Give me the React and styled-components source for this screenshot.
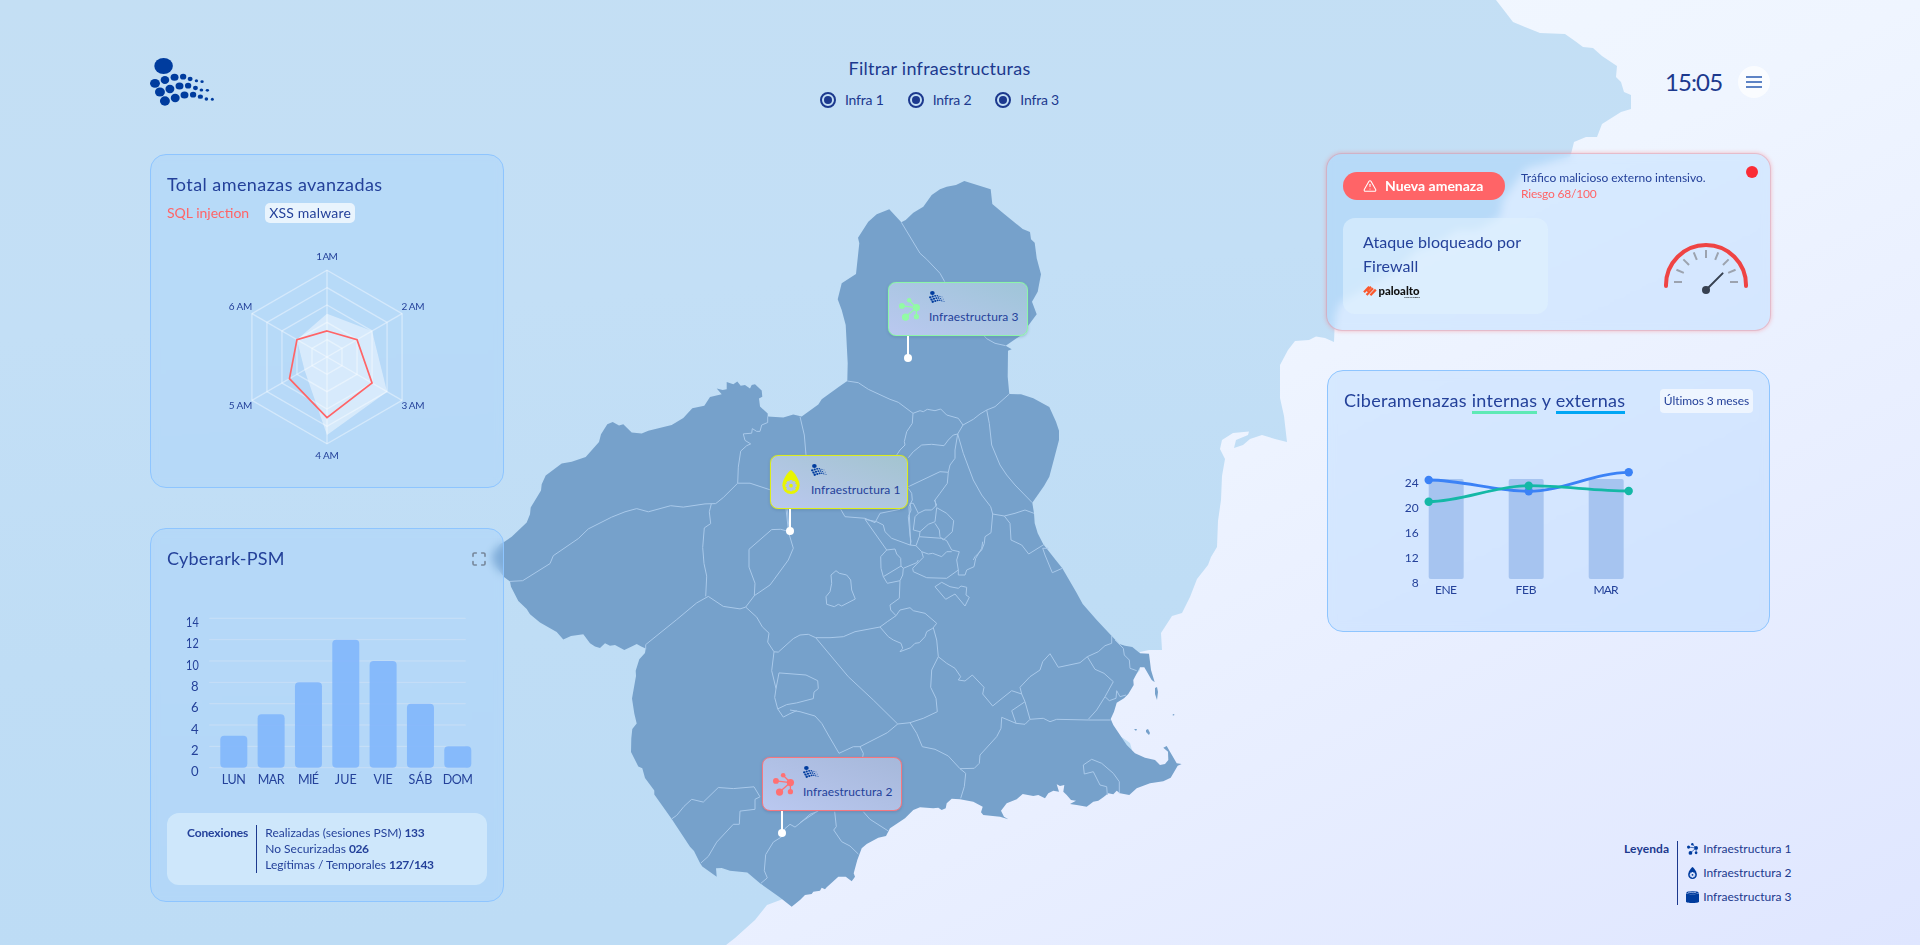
import React from "react";
import styled, { createGlobalStyle } from "styled-components";
import { Maximize, TriangleAlert } from "lucide-react";

const GlobalStyle = createGlobalStyle`
  * { box-sizing: border-box; }
  body { margin: 0; font-family: Lato, "Open Sans", sans-serif; color: #1c398e; }
`;

/* ---------- Map data: each sheet has its own origin, 3 units per pixel ---------- */
const sheet = (ox, oy, sy = 1 / 3) => (list) =>
  list.trim().split(/\s+/).map((p) => {
    const [x, y] = p.split(",").map(Number);
    return `${(ox + x / 3).toFixed(1)},${(oy + y * sy).toFixed(1)}`;
  }).join(" ");

const north = sheet(740, 160);
const south = sheet(800, 480);
const west = sheet(500, 360, 0.35714);

const REGION = [
  north("673,63 752,88 757,132 790,160 848,207 870,216 873,238 884,248 890,295 903,343 893,395 876,425 890,463 866,495 840,528 797,557 815,568 804,572 803,650 808,702 843,703 880,715 928,741 948,785 957,812 957,840 940,905 928,950 912,978 877,1028 882,1060 884,1090 893,1120 910,1153 947,1200"),
  south("787,265 828,335 848,372 890,420 935,468 958,492 975,497 997,501 1020,520 1047,521 1053,570 1064,607 1055,600 1033,562 1020,562 1000,600 1001,615 985,642 972,655 950,668 942,695 932,717 940,735 960,765 980,795 1005,820 1035,833 1065,840 1080,855 1095,852 1105,840 1104,815 1090,803 1100,798 1110,815 1130,850 1145,852 1133,857 1112,893 1090,904 1050,910 1010,925 988,945 960,940 950,932 940,943 925,940 910,952 895,962 880,965 860,980 830,975 810,972 828,962 813,960 800,945 790,935 793,915 780,918 770,913 777,935 760,932 745,940 735,955 715,945 700,948 668,942 650,958 620,970 603,992 612,1010 625,1018 600,1010 550,1005 543,997 548,980 520,965 480,958 455,956 440,970 437,985 425,990 415,983 400,985 360,982 340,990 315,1015 270,1045 258,1068 235,1073 200,1092 185,1105 172,1140 161,1180 165,1190 155,1204 137,1190 115,1190 95,1208 80,1222 75,1228 65,1223 60,1232 40,1235 35,1242 15,1245 0,1260"),
  west("875,1531 840,1505 780,1465 742,1435 690,1430 665,1422 648,1423 650,1447 607,1418 600,1408 582,1375 570,1363 515,1285 463,1217 463,1205 435,1170 427,1143 415,1138 393,1098 394,1060 397,1033 410,1018 403,990 396,948 408,885 407,870 418,838 435,820 437,808 425,803 410,795 395,802 373,812 345,798 330,800 315,793 300,806 285,802 270,793 250,768 213,773 190,783 170,762 120,735 90,712 80,697 55,675 33,635 30,620 12,608 -20,570 -25,545 0,515 12,510 35,495 80,455 90,432 92,413 123,365 125,348 137,323 185,290 215,285 257,272 297,230 303,208 322,180 338,174 357,183 370,180 395,203 425,206 445,198 515,182 550,162 577,135 613,128 630,104 665,96 650,80 668,84 680,82 680,62 700,68 712,60 722,72 735,70 750,80 755,70 765,68 785,85 787,103 777,108 780,130 803,150 803,158 850,161 880,153 905,158 955,125 965,110 1020,73"),
  north("322,663 323,610 317,495 305,450 293,418 305,370 348,342 358,250 354,233 385,185 410,163 448,148 484,187 497,180 520,158 550,140 575,105 600,88 620,80 648,75 673,63"),
].join(" ");

const BORDERS = [
  ...[
    "484,187 540,280 560,298 600,340 614,365",
    "733,528 740,536 765,550 797,557",
    "322,663 355,668 385,688 450,718 475,727 519,760 540,752 550,755 562,748 585,752 602,747 620,765 655,775 669,795 700,778 720,762 740,750 765,740 808,702",
    "519,760 517,790 500,815 493,845 495,855 480,870 470,885",
    "740,750 748,790 755,855 780,915 800,945 825,975 877,1028",
    "669,795 653,822 670,880 700,960 725,1005 752,1040 758,1062 753,1118 735,1130 733,1150 725,1170 705,1190 700,1200",
    "505,893 520,875 545,855 575,853 612,857 625,840 640,825 653,822 645,870 645,895 630,915 625,937 600,935 505,980",
    "625,937 622,970 600,1000 585,1020 588,1040",
    "180,770 193,825 198,885",
    "758,1062 793,1068 825,1060 855,1050 882,1060",
    "793,1068 810,1090 813,1140 845,1155 866,1182 913,1153",
    "302,1048 315,1070 375,1075 405,1088 420,1060 480,1048",
    "505,985 515,1000 517,1020 507,1040 512,1155",
  ].map(north),
  ...[
    "195,118 230,125 250,135 255,155 275,175 330,195 348,197 365,215 370,232 338,265 340,275 380,293 440,295 475,270 475,285 495,285 500,270 522,260 527,235 545,205 548,185",
    "195,118 260,210 285,207 290,222 302,235 303,258 310,265 350,248 355,240",
    "260,210 242,230 243,265 250,290 262,310 300,302 308,285 310,265",
    "250,290 303,258",
    "300,302 298,355 270,375 272,390 288,407",
    "330,70 333,90 325,110 330,165 333,185 330,195",
    "330,70 340,70 355,100 375,90 395,90 410,75 403,60",
    "410,83 405,125 385,133 360,155 340,150 345,110 355,100",
    "410,83 440,100 461,122 457,155 430,180 420,170 418,150 405,130",
    "360,155 358,170 425,175 440,182 455,210 478,215 470,240 475,270",
    "358,170 348,197",
    "365,215 385,222 398,220 425,230 440,215 455,215",
    "405,320 425,307 450,320 475,325 483,318 500,322 498,345 508,352 495,378 465,342 437,358 405,320",
    "108,272 118,280 140,285 152,300 155,330 166,357 125,378 115,373 103,380 80,373 78,350 90,335 95,310 93,285 108,272",
    "288,407 300,390 330,383 340,392 375,400 410,430 398,445 380,455 375,470 358,488 345,490 332,503 300,515 308,505 303,490 280,480 265,470 240,441 262,425 288,407",
    "0,465 25,463 47,473 90,473 130,470 165,455 240,441",
    "47,473 145,590 220,660 293,732 330,728 370,715 412,695 408,655 392,622 395,570 415,530 410,480 400,443",
    "415,530 440,550 465,565 482,590 475,600 495,603 517,585 552,622 548,642 578,678 600,660 635,632 665,642 660,622 690,590 720,570 728,545 750,521 775,562 840,548 862,530 895,515 915,497 935,490 935,468",
    "862,530 885,568 912,580 940,605 915,650 890,690 865,718",
    "915,650 928,662 948,655 950,632 960,650 978,645",
    "945,480 970,505 973,525 988,540 990,565 1010,572",
    "665,642 675,665 635,692 648,730 675,733 690,718 730,715 750,725 770,718 865,720 932,720",
    "675,665 690,718",
    "648,730 605,712 603,745 590,770 540,825 538,850 523,865 480,866 445,828 405,808 367,800 350,760 330,728",
    "480,866 497,880 493,920 482,955",
    "293,732 262,758 180,800 160,800 117,820 85,765 65,730 45,708 0,695 -30,690",
    "180,800 190,820 188,832",
    "958,940 958,905 940,880 905,850 875,838 850,855 853,882 880,875 900,915 920,920 922,945",
    "745,205 728,205 735,225 757,278 787,265",
    "0,1028 50,995",
    "104,995 109,1040 101,1050 125,1085 150,1098 175,1122",
    "190,995 210,1018 265,1053",
  ].map(south),
  ...[
    "30,620 68,618 150,570 160,548 235,500 265,473 335,440 375,425 410,416 445,425 512,408 550,412 615,403 647,402 670,385 713,345 750,345 812,364",
    "713,345 715,300 722,255 740,240 752,235 735,225 730,207 755,205 757,192 770,200 780,200 785,182 803,175 803,158",
    "634,403 628,425 632,458 613,470 608,525 612,570 620,605 617,662",
    "437,797 530,727 590,680 625,662 670,690 720,697 737,692 770,720 787,747 807,765 803,790 822,817 835,818 880,780 900,770",
    "437,797 437,810",
    "737,692 763,660 810,630 822,615 865,560 880,527 865,480 842,474 815,475 747,530 747,580 765,625 763,660",
    "858,417 865,475",
    "862,417 867,475",
    "822,817 815,870 828,920 824,945 833,977 850,1000 870,990 890,982",
    "833,977 860,965 890,960 940,948 942,930 955,920 953,898 918,882 837,876 828,920",
    "515,1285 530,1275 552,1250 575,1230 610,1238 655,1197 700,1200 762,1195 780,1223 765,1230 765,1258 720,1263 718,1300 700,1300 650,1350 625,1390 603,1408",
    "845,1335 820,1350 797,1385 793,1430 802,1450 783,1465",
    "845,1335 855,1312 870,1300 885,1308 900,1297 930,1272 955,1263",
  ].map(west),
];

const MAINLAND =
  "0,0 1496,0 1503,9 1513,22 1525,27 1540,33 1565,34 1575,41 1583,47 1593,48 1602,56 1617,66 1616,77 1621,82 1624,92 1631,95 1631,109 1621,112 1602,124 1597,137 1586,137 1574,142 1571,154 1570,157 1557,160 1540,165 1527,168 1517,180 1503,200 1500,217 1477,230 1457,230 1437,243 1417,250 1393,273 1367,287 1340,303 1335,317 1334,342 1325,338 1316,336.5 1309,340 1295,341 1288,350 1280,365 1280,398 1284,416 1287,442 1275,439 1262,435 1250,439 1243,445 1234,448 1236,440 1248,435 1249,431.5 1233,433 1222,440 1220,449 1225,459 1222,476 1221,500 1218,521 1217,547 1211,557 1208,565 1197,579 1190,597 1182,613 1172,616 1161,633 1162,650 1149,650 1140,652 1140,670 1133,678 1100,690 1105,730 1123,738 1130,743 1132,750 1100,760 900,800 783,899 767,905 755,920 735,938 726,945 0,945";

/* ---------- Page ---------- */
const Page = styled.div`
  position: relative;
  width: 1920px;
  height: 945px;
  overflow: hidden;
  padding: 54px 149px 40px 150px;
  display: flex;
  flex-direction: column;
  background: linear-gradient(to bottom right, #f3f9ff 20%, #eff5ff 50%, #e9efff 70%, #dfe6ff 100%);
`;

const MapLayer = styled.svg`
  position: absolute;
  inset: 0;
`;

const Header = styled.header`
  position: relative;
  height: 56px;
  display: flex;
  align-items: center;
  justify-content: space-between;
`;

const Filters = styled.div`
  display: flex;
  flex-direction: column;
  align-items: center;
  gap: 8px;
`;

const Title = styled.h2`
  margin: 0;
  font-size: 18px;
  line-height: 28px;
  font-weight: 400;
  letter-spacing: ${(p) => p.$track || 0}px;
  white-space: nowrap;
`;

const Options = styled.div`
  display: flex;
  gap: 24px;
`;

const Option = styled.label`
  display: flex;
  align-items: center;
  gap: 9px;
  font-size: 14px;
  line-height: 20px;
  letter-spacing: -0.2px;
`;

const Radio = styled.span`
  width: 16px;
  height: 16px;
  border-radius: 50%;
  border: 2px solid #1c398e;
  padding: 2px;
  background: #1c398e content-box;
`;

const Status = styled.div`
  display: flex;
  align-items: center;
  gap: 16px;
  margin-right: 1px;
`;

const Clock = styled.span`
  width: 57px;
  font-size: 24px;
  line-height: 32px;
  letter-spacing: -0.9px;
  white-space: nowrap;
`;

const MenuButton = styled.button`
  width: 32px;
  height: 32px;
  padding: 0;
  border: 0;
  border-radius: 50%;
  display: grid;
  place-items: center;
  background: rgba(255, 255, 255, 0.7);
`;

const Main = styled.main`
  position: relative;
  flex: 1;
  margin-top: 44px;
  display: flex;
  justify-content: space-between;
`;

const Column = styled.div`
  width: ${(p) => p.$width}px;
  display: flex;
  flex-direction: column;
  gap: 40px;
`;

const Panel = styled.section`
  position: relative;
  height: ${(p) => p.$height}px;
  padding: 16px;
  border: 1px solid #8ec5ff;
  border-radius: 16px;
  background: rgba(155, 203, 255, 0.28);
  backdrop-filter: blur(4px);
  color: #24419a;
`;

const AlertPanel = styled(Panel)`
  margin: -1px 0 -1px -1px;
  border-color: rgba(255, 100, 103, 0.34);
  box-shadow: 0 0 4px rgba(255, 100, 103, 0.4);
`;

const ThreatsPanel = styled(Panel)`
  margin-right: 1px;
`;

const PanelHead = styled.div`
  display: flex;
  align-items: center;
  justify-content: space-between;
  height: 28px;
  h2 { margin-top: -2px; }
`;

const Tags = styled.div`
  display: flex;
  gap: 16px;
  margin: 4px 0 8px;
  font-size: 14px;
  line-height: 20px;
`;

const Tag = styled.span`
  color: ${(p) => (p.$danger ? "#ff6467" : "inherit")};
  background: ${(p) => (p.$danger ? "none" : "rgba(255,255,255,.7)")};
  padding: ${(p) => (p.$danger ? 0 : "0 4px")};
  border-radius: 5px;
  white-space: nowrap;
  letter-spacing: ${(p) => p.$track || 0}px;
`;

const Badge = styled.span`
  padding: 0 4px;
  border-radius: 4px;
  background: rgba(255, 255, 255, 0.6);
  font-size: 12px;
  line-height: 24px;
  letter-spacing: -0.1px;
  white-space: nowrap;
`;

const Underline = styled.span`
  display: inline-block;
  height: 28px;
  border-bottom: 3px solid ${(p) => p.$color};
`;

const ChartSvg = styled.svg`
  display: block;
  overflow: visible;
`;

const Summary = styled.div`
  height: 72px;
  padding: 12px 20px;
  border-radius: 12px;
  background: rgba(223, 242, 254, 0.6);
  display: flex;
  font-size: 12px;
  line-height: 16px;
`;

const Lead = styled.strong`
  padding-right: 8px;
  border-right: 1.4px solid #1c398e;
  letter-spacing: ${(p) => p.$track || 0}px;
`;

const Lines = styled.div`
  padding-left: 8px;
  white-space: nowrap;
  b { letter-spacing: -0.4px; }
`;

const AlertTop = styled.div`
  display: flex;
  align-items: center;
  gap: 16px;
  height: 32px;
  margin-bottom: 16px;
  font-size: 12px;
  line-height: 16px;
`;

const AlertPill = styled.div`
  width: 162px;
  height: 28px;
  border-radius: 14px;
  padding-left: 20px;
  display: flex;
  align-items: center;
  gap: 8px;
  color: #fff;
  background: #ff6467;
  font-size: 14px;
  font-weight: 700;
  white-space: nowrap;
`;

const Risk = styled.div`
  color: #ff6467;
  letter-spacing: -0.2px;
`;

const Dot = styled.span`
  position: absolute;
  top: 12px;
  right: 12px;
  width: 12px;
  height: 12px;
  border-radius: 50%;
  background: #fb2c36;
`;

const AlertBody = styled.div`
  display: flex;
  justify-content: space-between;
`;

const Blocked = styled.div`
  width: 205px;
  height: 96px;
  padding: 12px 20px;
  border-radius: 12px;
  background: rgba(223, 242, 254, 0.6);
  font-size: 16px;
  line-height: 24px;
  letter-spacing: 0.08px;
  white-space: nowrap;
`;

const Legend = styled.div`
  margin: auto -21px 0 auto;
  width: 168px;
  height: 64px;
  display: flex;
  font-size: 12px;
  line-height: 16px;
  color: #1c398e;
`;

const LegendItems = styled.div`
  display: flex;
  flex-direction: column;
  gap: 8px;
  padding-left: 8px;
`;

const LegendItem = styled.div`
  display: flex;
  align-items: center;
  gap: 4px;
  white-space: nowrap;
  svg { width: 13px; height: 12px; }
`;

const Callout = styled.div`
  position: absolute;
  left: ${(p) => p.$x}px;
  top: ${(p) => p.$y}px;
  width: ${(p) => p.$w}px;
  height: 54px;
  padding: 8px;
  display: flex;
  gap: 8px;
  border: 1px solid ${(p) => p.$color};
  border-radius: 8px;
  background: linear-gradient(to top right, #bac8f0, ${(p) => p.$tint});
  box-shadow: 0 0 1px ${(p) => p.$color}, 0 1px 3px rgba(40, 70, 120, 0.25);
  color: #24419a;
  &::before {
    content: "";
    position: absolute;
    left: 18px;
    top: 53px;
    width: 2px;
    height: 22px;
    background: #fff;
  }
  &::after {
    content: "";
    position: absolute;
    left: 15px;
    top: 71px;
    width: 8px;
    height: 8px;
    border-radius: 50%;
    background: #fff;
  }
`;

const CalloutIcon = styled.span`
  width: 24px;
  height: 36px;
  display: grid;
  place-items: center;
`;

const CalloutText = styled.div`
  display: flex;
  flex-direction: column;
  gap: 6px;
  font-size: 12px;
  line-height: 16px;
  letter-spacing: 0.08px;
  white-space: nowrap;
`;

/* ---------- Drawings ---------- */
const LOGO_DOTS = [
  [71, 78, 28, 24],
  [45, 130, 15, 13], [75, 120, 13, 12], [104, 112, 12, 10.5], [130, 110, 9.5, 8.5], [151, 117, 7.5, 6.5], [170, 122, 5, 4.5], [187, 125, 5, 4],
  [60, 156, 15, 13.5], [90, 147, 13.5, 12.5], [119, 138, 12, 10.5], [145, 137, 9.5, 8.5], [167, 144, 7.5, 6.5], [185, 150, 5.5, 4.5], [203, 151, 5, 4],
  [75, 183, 15, 14], [106, 174, 13.5, 12.5], [134, 165, 12, 10.5], [160, 164, 9.5, 8.5], [182, 170, 8, 6.5], [200, 177, 5.5, 5.5], [218, 178, 4.5, 4.5],
];

const Logo = ({ width, height }) => (
  <svg width={width} height={height} viewBox="30 54 193 144" fill="#003c9e" preserveAspectRatio="none">
    {LOGO_DOTS.map(([x, y, rx, ry]) => <ellipse key={`${x}-${y}`} cx={x} cy={y} rx={rx} ry={ry} />)}
  </svg>
);

const MenuIcon = () => (
  <svg width="16" height="16" stroke="#2a5bb3" strokeWidth="1.7">
    <path d="M0 3H16M0 8H16M0 13H16" />
  </svg>
);

const NetworkIcon = ({ color, size }) => (
  <svg width={size} height={size} viewBox="0 0 66 70" fill={color} stroke={color}>
    <path d="M54 29 10 24M54 29 32 7M54 29 21 58M54 29V57" strokeWidth="4" fill="none" />
    <g stroke="none">
      <circle cx="54" cy="29" r="11" />
      <circle cx="10" cy="24" r="9" />
      <circle cx="32" cy="7" r="7" />
      <circle cx="21" cy="58" r="11" />
      <circle cx="54" cy="57" r="8" />
    </g>
  </svg>
);

const DropIcon = ({ color, hole, size }) => (
  <svg width={size} height={size} viewBox="0 0 72 72">
    <path d="M36 0C46 6 62 30 62 46a26 26 0 0 1-52 0C10 30 26 6 36 0Z" fill={color} />
    {[0, 45, 90, 135].map((a) => (
      <rect key={a} x="31" y="30" width="10" height="34" rx="3" fill={hole} transform={`rotate(${a} 36 47)`} />
    ))}
    <circle cx="36" cy="47" r="12" fill={hole} />
    <circle cx="36" cy="47" r="5.5" fill={color} />
  </svg>
);

const TankIcon = () => (
  <svg viewBox="0 0 36 36" preserveAspectRatio="none" fill="#003c9e">
    <path d="M0 7v25c0 5 36 5 36 0V7c-6 4-30 4-36 0Z" />
    <ellipse cx="18" cy="5" rx="17" ry="4.5" />
    <path d="M6 5c6-3 10 2 22-1" stroke="#c9d8fb" strokeWidth="2" fill="none" />
  </svg>
);

const angleOf = (i) => (Math.PI / 3) * i - Math.PI / 2;
const radarPoints = (values, cx, cy, r) =>
  values.map((v, i) => `${cx + Math.cos(angleOf(i)) * r * v},${cy + Math.sin(angleOf(i)) * r * v}`).join(" ");

const Radar = () => {
  const cx = 160, cy = 126, r = 86.7;
  const labels = [[160, 29.3, "1 AM", 21.5], [246, 79.2, "2 AM", 23], [246, 178.4, "3 AM", 23], [160, 228.4, "4 AM", 23.5], [73.5, 178.4, "5 AM", 23.5], [73.5, 79.2, "6 AM", 23.5]];
  return (
    <ChartSvg width="320" height="240">
      <g fill="none" stroke="#fff" strokeOpacity=".4" strokeWidth="1.3">
        {[0.2, 0.4, 0.6, 0.8, 1].map((s) => <polygon key={s} points={radarPoints(Array(6).fill(s), cx, cy, r)} />)}
        {[0, 1, 2, 3, 4, 5].map((i) => (
          <line key={i} x1={cx} y1={cy} x2={cx + Math.cos(angleOf(i)) * r} y2={cy + Math.sin(angleOf(i)) * r} />
        ))}
      </g>
      <polygon points={radarPoints([0.5, 0.6, 0.8, 0.9, 0.3, 0.4], cx, cy, r)} fill="#fff" fillOpacity=".45" />
      <polygon points={radarPoints([0.3, 0.4, 0.6, 0.7, 0.5, 0.4], cx, cy, r)} fill="none" stroke="#ff6467" strokeWidth="1.7" />
      <g fill="#24419a" fontSize="10" textAnchor="middle">
        {labels.map(([x, y, t, w]) => <text key={t} x={x} y={y} textLength={w}>{t}</text>)}
      </g>
    </ChartSvg>
  );
};

const WEEK = [["LUN", 3, 24], ["MAR", 5, 27], ["MIÉ", 8, 21], ["JUE", 12, 22], ["VIE", 10, 19], ["SÁB", 6, 24], ["DOM", 2, 30]];

const WeekChart = () => (
  <ChartSvg width="320" height="240">
    {[0, 2, 4, 6, 8, 10, 12, 14].map((v) => (
      <line key={v} x1="42.3" x2="298.7" y1={194.7 - v * 10.67} y2={194.7 - v * 10.67} stroke="#cfe0f6" strokeOpacity=".75" />
    ))}
    {WEEK.map(([d, v], i) => (
      <rect key={d} x={53.3 + i * 37.33} y={194.7 - v * 10.67} width="27" height={v * 10.67} rx="4" fill="#7fb5fc" fillOpacity=".88" />
    ))}
    <g fill="#24419a" fontSize="12.5">
      {[0, 2, 4, 6, 8, 10, 12, 14].map((v) => (
        <text key={v} x="31.7" y={203.2 - v * 10.67} textAnchor="end" textLength={v > 9 ? 12.6 : 7.6} lengthAdjust="spacingAndGlyphs">{v}</text>
      ))}
      {WEEK.map(([d, , w], i) => (
        <text key={d} x={66.8 + i * 37.33} y="211.3" textAnchor="middle" textLength={w}>{d}</text>
      ))}
    </g>
  </ChartSvg>
);

const QuarterChart = () => (
  <ChartSvg width="410" height="200">
    {[0, 1, 2].map((i) => <rect key={i} x={84.7 + i * 80} y="64" width="35" height="100" rx="2" fill="#a6c4f0" />)}
    <g fill="#24419a" fontSize="12">
      {[24, 20, 16, 12, 8].map((v, i) => <text key={v} x="74.7" y={72.3 + i * 25} textAnchor="end">{v}</text>)}
      {[["ENE", 22], ["FEB", 21], ["MAR", 25]].map(([m, w], i) => (
        <text key={m} x={102 + i * 80} y="179.2" textAnchor="middle" textLength={w}>{m}</text>
      ))}
    </g>
    {[["#3b82f6", [65, 76.3, 57.3]], ["#14b8a6", [86.7, 70.7, 76]]].map(([c, [a, b, d]]) => (
      <g key={c} fill={c}>
        <path d={`M84.7 ${a}C118 ${a} 151.3 ${b} 184.7 ${b}S251.3 ${d} 284.7 ${d}`} fill="none" stroke={c} strokeWidth="2.8" />
        <circle cx="84.7" cy={a} r="4.2" />
        <circle cx="184.7" cy={b} r="4.2" />
        <circle cx="284.7" cy={d} r="4.2" />
      </g>
    ))}
  </ChartSvg>
);

const Gauge = () => (
  <ChartSvg width="96" height="96">
    <path d="M8 68V67a40 40 0 0 1 80 0V68" fill="none" stroke="#ef4444" strokeWidth="4" strokeLinecap="round" />
    {[...Array(9)].map((_, i) => (
      <line key={i} x1="16" x2="24" y1="64" y2="64" stroke="#9ca3af" strokeWidth="2" transform={`rotate(${i * 22.5} 48 64)`} />
    ))}
    <path d="M48 72 64.6 55.4" stroke="#374151" strokeWidth="2" strokeLinecap="round" />
    <circle cx="48" cy="72" r="4" fill="#374151" />
  </ChartSvg>
);

const PaloAlto = () => (
  <ChartSvg width="60" height="24">
    <g stroke="#fa582d" strokeWidth="2.3" strokeLinecap="butt">
      <path d="M1 14.2 6.2 8.8M3.6 17 10 10.2M4.4 14.4 6 12.8M7.4 17.2 12.8 11.6M8 8.8 4 13" />
    </g>
    <text x="15.5" y="16.5" fontSize="10.5" fontWeight="900" fill="#111" letterSpacing="0" textLength="41" lengthAdjust="spacingAndGlyphs">paloalto</text>
    <text x="41" y="20" fontSize="2.6" fontWeight="700" fill="#111" letterSpacing="0" textLength="16" lengthAdjust="spacingAndGlyphs">NETWORKS</text>
  </ChartSvg>
);

const Backdrop = () => (
  <MapLayer width="1920" height="945">
    <defs>
      <linearGradient id="land" x1="0" y1="0" x2=".12" y2="1">
        <stop offset="0" stopColor="#c4dff4" />
        <stop offset=".35" stopColor="#c3dff6" />
        <stop offset=".7" stopColor="#bfddf5" />
        <stop offset="1" stopColor="#bddcf5" />
      </linearGradient>
    </defs>
    <polygon points={MAINLAND} fill="url(#land)" />
    <g fill="#76a1cb">
      <polygon points={REGION} />
      <path d="M1155 688l2-1 1 5-1 8-2-6ZM1173 714l1.5.5-.5 1-1.5-.3ZM1134 729l3 0-1 2ZM1146 730l2-1 2 4-1 2-3-3Z" />
    </g>
    <g fill="none" stroke="#a9c9ea" strokeWidth="1" strokeLinejoin="round">
      {BORDERS.map((p) => <polyline key={p} points={p} />)}
    </g>
  </MapLayer>
);

const CALLOUTS = [
  { name: "Infraestructura 3", x: 888, y: 282, w: 140, color: "#8df5a9", tint: "#9fc5d8", icon: <NetworkIcon color="#92fba5" size={23} /> },
  { name: "Infraestructura 1", x: 770, y: 455, w: 138, color: "#dcec1e", tint: "#a3c4cf", icon: <DropIcon color="#e8f500" hole="#b3c5e4" size={24} /> },
  { name: "Infraestructura 2", x: 762, y: 757, w: 140, color: "#f6777f", tint: "#a6b8da", icon: <NetworkIcon color="#ff7073" size={23} /> },
];

export default function App() {
  return (
    <>
      <GlobalStyle />
      <Page>
        <Backdrop />
        {CALLOUTS.map((c) => (
          <Callout key={c.name} $x={c.x} $y={c.y} $w={c.w} $color={c.color} $tint={c.tint}>
            <CalloutIcon>{c.icon}</CalloutIcon>
            <CalloutText>
              <Logo width={16} height={12} />
              {c.name}
            </CalloutText>
          </Callout>
        ))}
        <Header>
          <Logo width={64} height={48} />
          <Filters>
            <Title $track={0.26}>Filtrar infraestructuras</Title>
            <Options>
              {["Infra 1", "Infra 2", "Infra 3"].map((o) => (
                <Option key={o}><Radio />{o}</Option>
              ))}
            </Options>
          </Filters>
          <Status>
            <Clock>15:05</Clock>
            <MenuButton><MenuIcon /></MenuButton>
          </Status>
        </Header>
        <Main>
          <Column $width={354}>
            <Panel $height={334}>
              <PanelHead><Title $track={0.43}>Total amenazas avanzadas</Title></PanelHead>
              <Tags><Tag $danger>SQL injection</Tag><Tag $track={0.2}>XSS malware</Tag></Tags>
              <Radar />
            </Panel>
            <Panel $height={374}>
              <PanelHead><Title $track={0.2}>Cyberark-PSM</Title><Maximize size={16} strokeWidth={2.4} color="#76869a" /></PanelHead>
              <WeekChart />
              <Summary>
                <Lead $track={-0.12}>Conexiones</Lead>
                <Lines>
                  Realizadas (sesiones PSM) <b>133</b><br />
                  No Securizadas <b>026</b><br />
                  Legítimas / Temporales <b>127/143</b>
                </Lines>
              </Summary>
            </Panel>
          </Column>
          <Column $width={444}>
            <AlertPanel $height={178}>
              <Dot />
              <AlertTop>
                <AlertPill><TriangleAlert size={14} strokeWidth={1.8} />Nueva amenaza</AlertPill>
                <div>Tráfico malicioso externo intensivo.<Risk>Riesgo 68/100</Risk></div>
              </AlertTop>
              <AlertBody>
                <Blocked>Ataque bloqueado por<br />Firewall<PaloAlto /></Blocked>
                <Gauge />
              </AlertBody>
            </AlertPanel>
            <ThreatsPanel $height={262}>
              <PanelHead>
                <Title $track={0.26}>Ciberamenazas <Underline $color="#5ee9b5">internas</Underline> y <Underline $color="#00a6f4">externas</Underline></Title>
                <Badge>Últimos 3 meses</Badge>
              </PanelHead>
              <QuarterChart />
            </ThreatsPanel>
            <Legend>
              <Lead $track={0.12}>Leyenda</Lead>
              <LegendItems>
                <LegendItem><NetworkIcon color="#003c9e" />Infraestructura 1</LegendItem>
                <LegendItem><DropIcon color="#003c9e" hole="#dbe5fd" />Infraestructura 2</LegendItem>
                <LegendItem><TankIcon />Infraestructura 3</LegendItem>
              </LegendItems>
            </Legend>
          </Column>
        </Main>
      </Page>
    </>
  );
}
